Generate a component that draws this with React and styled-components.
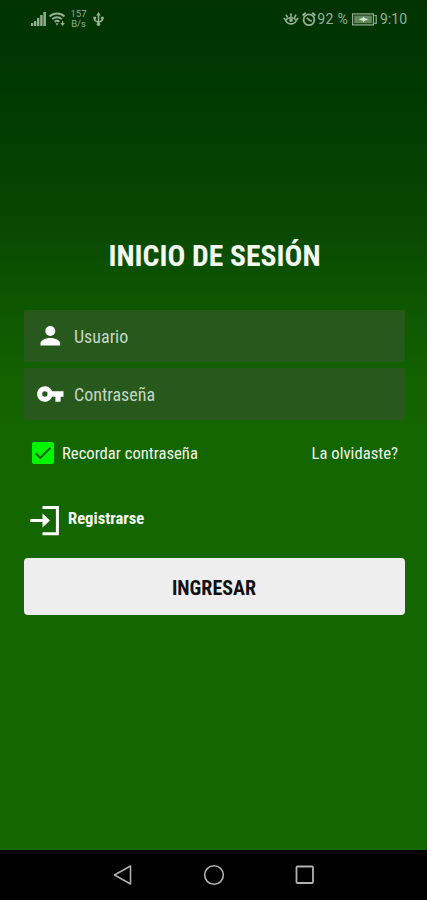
import React, {useState} from 'react';
import styled, {createGlobalStyle} from 'styled-components';

const GlobalStyle = createGlobalStyle`
    * {
        box-sizing: border-box;
    }

    body {
        margin: 0;
        font-family: 'Roboto Condensed', Roboto, sans-serif;
        font-stretch: 75%;
    }
`

const Screen = styled.div`
    width: 427px;
    height: 900px;
    display: flex;
    flex-direction: column;
    background: linear-gradient(#003300 0px, #003802 80px, #084800 225px, #0d5400 290px, #126200 380px, #146600 430px);
`

const StatusBar = styled.header`
    height: 38px;
    padding: 0 20px 0 31px;
    display: flex;
    align-items: center;
    justify-content: space-between;
    color: #96b096;
    font-family: Roboto, sans-serif;
    font-stretch: 100%;
    font-size: 14px;
`

const StatusGroup = styled.div`
    display: flex;
    align-items: center;
    gap: ${props => props.$gap}px;

    svg {
        display: block;
    }
`

const Speed = styled.div`
    width: 17px;
    margin: 0 3px 0 1px;
    font-size: 9.5px;
    line-height: 10px;
    text-align: center;
`

const Charge = styled.span`
    margin: 0 1px 0 -2px;
    letter-spacing: 0.3px;
`

const Form = styled.form`
    flex: 1;
    padding: 200px 22px 0 24px;
    display: flex;
    flex-direction: column;
`

const Condensed = styled.span`
    display: inline-block;
    white-space: nowrap;
`

const Title = styled.h1`
    margin: 0 0 36px;
    color: #f4f8f2;
    font-size: 29.6px;
    font-weight: 700;
    line-height: 36px;
    text-align: center;
`

const Field = styled.label`
    height: 52px;
    margin-bottom: 6px;
    padding-left: 12px;
    display: flex;
    align-items: center;
    background: #27591d;
    border-radius: 2px;

    svg {
        width: 28px;
        height: 28px;
        margin-right: 10px;
        flex: none;
    }
`

const Input = styled.input`
    flex: 1;
    min-width: 0;
    padding: 0;
    border: 0;
    outline: 0;
    background: none;
    color: #fff;
    font: inherit;
    font-size: 18px;

    &::placeholder {
        color: #c6d6c2;
        opacity: 1;
    }
`

const Options = styled.div`
    height: 22px;
    margin-top: 16px;
    padding: 0 7px 0 8px;
    display: flex;
    align-items: center;
    color: #eef5eb;
    font-size: 16.65px;
`

const CheckBox = styled.button`
    width: 22px;
    height: 22px;
    margin-right: 8px;
    padding: 0;
    border: 0;
    border-radius: 2px;
    background: #00f500;

    svg {
        display: block;
    }
`

const Forgot = styled.a`
    margin-left: auto;
`

const Register = styled.a`
    height: 30px;
    margin: 42px 0 22px 6px;
    display: flex;
    align-items: center;
    gap: 8px;
    color: #f4f8f2;
    font-size: 16.6px;
    font-weight: 700;

    span {
        margin-bottom: 5px;
    }
`

const SubmitButton = styled.button`
    height: 57px;
    padding: 2px 1px 0 0;
    border: 0;
    border-radius: 4px;
    background: #eeeeee;
    color: #111;
    font: inherit;
    font-size: 20px;
    font-weight: 700;
`

const NavBar = styled.nav`
    height: 50px;
    padding: 0 112px 0 112px;
    display: flex;
    align-items: center;
    justify-content: space-between;
    background: #000;
`

const SignalIcon = () => (
    <svg width="15" height="15" viewBox="0 0 15 15" fill="currentColor">
        <path d="M0 11h2.300v3H0zM3 9h2.300v5H3zM6 6h2.400v8H6zM9.200 3h2.400v11H9.200zM12.400 0h2.500v14h-2.500z" />
    </svg>
)

const WifiIcon = () => (
    <svg width="17" height="15" viewBox="0 0 17 15" fill="none" stroke="currentColor" strokeWidth="1.8">
        <path d="M.6 4.500C4.600.500 11.500.500 15.500 4.500M3.200 7.200c2.700-2.600 7-2.600 9.700 0M5.600 9.800c1.500-1.300 3.400-1.300 4.900 0" />
        <path d="M6.500 11.300l1.600 2.500 1.600-2.500z" fill="currentColor" stroke="none" />
        <path d="M11.300 11h4.600l-2.300 3zM13 9h1.200v3H13z" fill="currentColor" stroke="none" />
    </svg>
)

const UsbIcon = () => (
    <svg width="11" height="15" viewBox="0 0 11 15" fill="none" stroke="currentColor" strokeWidth="1.5">
        <path d="M5.500 3v9M1.700 6v2.300l3.800 2.200M9.300 6v2.300l-3.800 2.200" />
        <path d="M5.500 0l2.300 3.500H3.200zM.3 4.700h2.800v2.600H.3zM7.900 4.700h2.800v2.600H7.900z" fill="currentColor" stroke="none" />
        <circle cx="5.500" cy="12.300" r="1.800" fill="currentColor" stroke="none" />
    </svg>
)

const EyeIcon = () => (
    <svg width="16" height="14" viewBox="0 0 16 14" fill="none" stroke="currentColor" strokeWidth="1.6">
        <path d="M2.600 8.300c2.500-3.500 8.300-3.500 10.800 0-2.500 4.800-8.300 4.800-10.800 0zM8 5V1.200M4.600 5.500L2.900 2.700M11.400 5.500l1.700-2.800M2.800 7.800L.6 6M13.200 7.800L15.400 6" />
        <circle cx="8" cy="8.300" r="1.800" fill="currentColor" stroke="none" />
    </svg>
)

const AlarmIcon = () => (
    <svg width="14" height="15" viewBox="0 0 14 15" fill="none" stroke="currentColor" strokeWidth="1.800">
        <circle cx="7" cy="7.800" r="5.400" />
        <path d="M.6 3.500L3.700.8M13.400 3.500L10.300.8M4.800 5.800l2.500 2.300 2.400 1.200" />
    </svg>
)

const BatteryIcon = () => (
    <svg width="25" height="13" viewBox="0 0 25 13">
        <rect x=".6" y=".9" width="20.800" height="11" fill="none" stroke="currentColor" strokeWidth="1.200" />
        <rect x="2.200" y="2.500" width="17.600" height="7.800" fill="#64895f" />
        <path d="M6.500 6.300l4-1.200 1-1.600 1.500 1.700 3.500 1.100-3.500 1.200-1.500 1.600-1-1.600z" fill="#d8e4d5" />
        <path d="M22.300 2.500h1.900v7.800h-1.900" fill="none" stroke="currentColor" strokeWidth="1.200" />
    </svg>
)

const UserIcon = () => (
    <svg viewBox="0 0 28 28" fill="#fff">
        <circle cx="14.300" cy="9" r="5" />
        <path d="M4.500 23.500v-2.300c0-3.400 6.500-5.200 9.800-5.200s9.800 1.800 9.800 5.200v2.300z" />
    </svg>
)

const KeyIcon = () => (
    <svg viewBox="0 0 28 28" fill="#fff">
        <path fillRule="evenodd" d="M16 11.300a7.700 7.700 0 1 0 0 5.400h3.400v5h5.200v-5h2.900v-5.400zM8.900 16.700a2.700 2.700 0 1 1 0-5.400 2.700 2.700 0 0 1 0 5.400z" />
    </svg>
)

const RegisterIcon = () => (
    <svg width="30" height="30" viewBox="0 0 30 30">
        <path d="M12.500 1.500h14.900v26.200H12.500" fill="none" stroke="#fff" strokeWidth="3" />
        <path d="M.3 14.500h14" stroke="#fff" strokeWidth="3" />
        <path d="M12.500 7.500l7.500 7-7.500 7z" fill="#fff" />
    </svg>
)

const App = () => {

    const [remember, setRemember] = useState(true);

    return (
        <Screen>
            <GlobalStyle />
            <StatusBar>
                <StatusGroup $gap={3}>
                    <SignalIcon />
                    <WifiIcon />
                    <Speed>157 B/s</Speed>
                    <UsbIcon />
                </StatusGroup>
                <StatusGroup $gap={3}>
                    <EyeIcon />
                    <AlarmIcon />
                    <Charge>92 %</Charge>
                    <BatteryIcon />
                    <span>9:10</span>
                </StatusGroup>
            </StatusBar>
            <Form onSubmit={e => e.preventDefault()}>
                <Title><Condensed>INICIO DE SESIÓN</Condensed></Title>
                <Field>
                    <UserIcon />
                    <Input placeholder="Usuario" />
                </Field>
                <Field>
                    <KeyIcon />
                    <Input type="password" placeholder="Contraseña" />
                </Field>
                <Options>
                    <CheckBox type="button" onClick={() => setRemember(!remember)}>
                        {remember && (
                            <svg width="22" height="22" viewBox="0 0 22 22" fill="none" stroke="#146400" strokeWidth="2">
                                <path d="M3.500 11.300l4.800 4.500L18.500 5.800" />
                            </svg>
                        )}
                    </CheckBox>
                    <Condensed>Recordar contraseña</Condensed>
                    <Forgot><Condensed>La olvidaste?</Condensed></Forgot>
                </Options>
                <Register>
                    <RegisterIcon />
                    <Condensed>Registrarse</Condensed>
                </Register>
                <SubmitButton><Condensed>INGRESAR</Condensed></SubmitButton>
            </Form>
            <NavBar>
                <svg width="20" height="20" viewBox="0 0 20 20" fill="none" stroke="#b0b0b0" strokeWidth="1.600">
                    <path d="M2.500 10L18.500 1v18z" strokeLinejoin="round" />
                </svg>
                <svg width="22" height="22" viewBox="0 0 22 22" fill="none" stroke="#b0b0b0" strokeWidth="1.600">
                    <circle cx="11" cy="11" r="9.300" />
                </svg>
                <svg width="20" height="20" viewBox="0 0 20 20" fill="none" stroke="#b0b0b0" strokeWidth="1.800">
                    <rect x="1.500" y="1.500" width="16.500" height="16.500" rx="1" />
                </svg>
            </NavBar>
        </Screen>
    )
}

export default App;
